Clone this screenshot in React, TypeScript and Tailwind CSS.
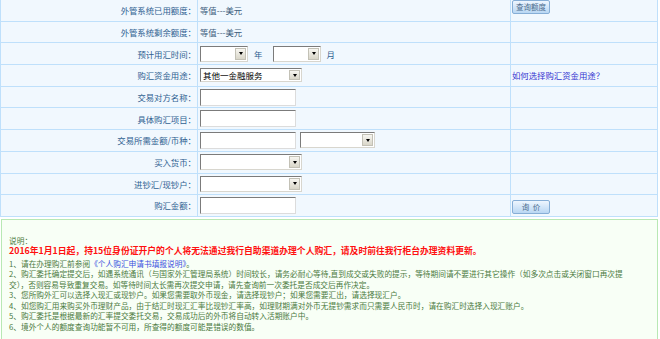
import React from "react";

const font = { fontFamily: '"Noto Sans CJK SC", "Noto Sans", sans-serif' };

function Sel({ cls, text }: { cls: string; text?: string }) {
  return (
    <div
      className={
        "flex items-stretch bg-white border border-t-[#7b7b7b] border-l-[#7b7b7b] border-r-[#d8d6ce] border-b-[#d8d6ce] " +
        cls
      }
    >
      <div className="flex-1 flex items-center pl-[2px] text-[8.5px] text-black leading-none overflow-hidden whitespace-nowrap">
        {text}
      </div>
      <div className="w-[11px] my-[1px] mr-[1px] flex items-center justify-center border border-[#c3c1b6] bg-gradient-to-b from-[#f7f6f1] to-[#d9d6c9]">
        <div className="w-0 h-0 border-l-[2.5px] border-r-[2.5px] border-t-[3px] border-l-transparent border-r-transparent border-t-black" />
      </div>
    </div>
  );
}

function Inp({ cls }: { cls: string }) {
  return (
    <div
      className={
        "bg-white border border-t-[#7b7b7b] border-l-[#7b7b7b] border-r-[#dcdcdc] border-b-[#dcdcdc] " +
        cls
      }
    />
  );
}

function Btn({ children }: { children: React.ReactNode }) {
  return (
    <div className="w-[38px] h-[14px] flex items-center justify-center rounded-[2px] border border-[#86aed6] bg-gradient-to-b from-[#eef6fe] to-[#b9d7f3] text-[7.5px] text-[#4d6d8e] leading-none whitespace-nowrap">
      {children}
    </div>
  );
}

function Row({
  label,
  children,
  right,
}: {
  label: string;
  children?: React.ReactNode;
  right?: React.ReactNode;
}) {
  return (
    <div className="flex h-[21.7px] border-b border-[#bfe0fb]">
      <div className="w-[197px] shrink-0 flex items-center justify-end pr-[1px] border-r border-[#bfe0fb] text-[8.4px] text-[#2f6191] leading-none whitespace-nowrap">
        {label}
      </div>
      <div className="w-[313px] shrink-0 flex items-center pl-[2px] border-r border-[#bfe0fb] text-[8.4px] text-[#3c5c7c] leading-none whitespace-nowrap">
        {children}
      </div>
      <div className="flex-1 flex items-center pl-[1px]">{right}</div>
    </div>
  );
}

export default function App() {
  return (
    <div className="w-[660px] h-[339px] overflow-hidden bg-white" style={font}>
      <div className="w-[658px] bg-[#f1f8fe] border-l border-r border-[#bfe0fb]">
        <Row label="外管系统已用额度：" right={<div className="-mt-[7px]"><Btn>查询额度</Btn></div>}>
          等值---美元
        </Row>
        <Row label="外管系统剩余额度：">等值---美元</Row>
        <Row label="预计用汇时间：">
          <Sel cls="w-[48px] h-[16px]" />
          <span className="ml-[6px] mr-[11px] text-[#2f6191]">年</span>
          <Sel cls="w-[48px] h-[16px]" />
          <span className="ml-[5px] text-[#2f6191]">月</span>
        </Row>
        <Row
          label="购汇资金用途："
          right={
            <span className="text-[8.4px] text-[#3434d0] leading-none whitespace-nowrap">
              如何选择购汇资金用途？
            </span>
          }
        >
          <Sel cls="w-[102px] h-[14px]" text="其他一金融服务" />
        </Row>
        <Row label="交易对方名称：">
          <Inp cls="w-[96px] h-[17px]" />
        </Row>
        <Row label="具体购汇项目：">
          <Inp cls="w-[96px] h-[17px]" />
        </Row>
        <Row label="交易所需金额/币种：">
          <Inp cls="w-[96px] h-[17px]" />
          <div className="ml-[4px]">
            <Sel cls="w-[75px] h-[16px]" />
          </div>
        </Row>
        <Row label="买入货币：">
          <Sel cls="w-[102px] h-[16px]" />
        </Row>
        <Row label="进钞汇/现钞户：">
          <Sel cls="w-[102px] h-[16px]" />
        </Row>
        <Row label="购汇金额：" right={<div className="mt-[2px]"><Btn>询&nbsp;&nbsp;价</Btn></div>}>
          <Inp cls="w-[96px] h-[17px]" />
        </Row>
      </div>
      <div className="mt-[2px] ml-[1px] w-[657px] h-[130px] border border-[#b8e8b4] bg-[#f8fff6] pl-[7px] pt-[16px] text-[7.7px] leading-[10.5px] text-[#4b7a3e] whitespace-nowrap">
        <div>说明：</div>
        <div className="font-bold text-[8.8px] text-[#ff1010]">
          2016年1月1日起，持15位身份证开户的个人将无法通过我行自助渠道办理个人购汇，请及时前往我行柜台办理资料更新。
        </div>
        <div className="mt-[2px]">
          1、请在办理购汇前参阅<span className="text-[#3a4fe0]">《个人购汇申请书填报说明》</span>。
        </div>
        <div>
          2、购汇委托确定提交后，如遇系统通讯（与国家外汇管理局系统）时间较长，请务必耐心等待,直到成交或失败的提示，等待期间请不要进行其它操作（如多次点击或关闭窗口再次提
        </div>
        <div>交），否则容易导致重复交易。如等待时间太长需再次提交申请，请先查询前一次委托是否成交后再作决定。</div>
        <div>3、您所购外汇可以选择入现汇或现钞户。如果您需要取外币现金，请选择现钞户；如果您需要汇出，请选择现汇户。</div>
        <div>4、如您购汇用来购买外币理财产品，由于结汇时现汇汇率比现钞汇率高，如理财期满对外币无提钞需求而只需要人民币时，请在购汇时选择入现汇账户。</div>
        <div>5、购汇委托是根据最新的汇率提交委托交易，交易成功后的外币将自动转入活期账户中。</div>
        <div>6、境外个人的额度查询功能暂不可用，所查得的额度可能是错误的数值。</div>
      </div>
    </div>
  );
}
